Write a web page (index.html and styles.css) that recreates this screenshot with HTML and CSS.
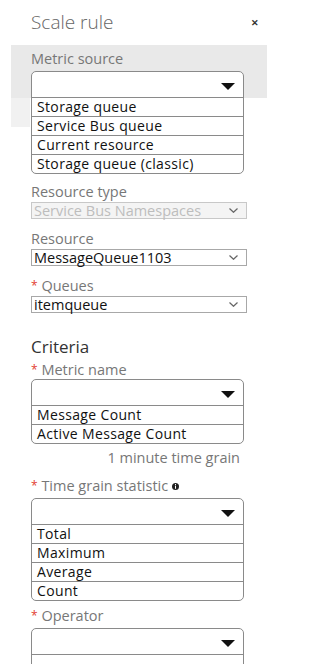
FILE: index.html
```html
<!DOCTYPE html>
<html lang="en">
<head>
  <meta charset="UTF-8" />
  <meta name="viewport" content="width=device-width, initial-scale=1.0"/>
  <title>Scale rule</title>
  <link rel="stylesheet" href="styles.css">
</head>
<body>
  <div class="panel">
    <header class="panel-head">
      <h1>Scale rule</h1>
      <span class="close">&#x2715;</span>
    </header>

    <div class="source-band">
      <div class="field-label">Metric source</div>
      <div class="dropdown">
        <div class="dropdown-head">
          <svg class="caret" width="14" height="7" viewBox="0 0 14 7"><polygon points="0,0 14,0 7,7" fill="#111"/></svg>
        </div>
        <ul class="dropdown-list">
          <li>Storage queue</li>
          <li>Service Bus queue</li>
          <li>Current resource</li>
          <li>Storage queue (classic)</li>
        </ul>
      </div>
    </div>

    <div class="form">
      <div class="field field-first">
        <div class="field-label">Resource type</div>
        <div class="select disabled">
          <span>Service Bus Namespaces</span>
          <svg width="9" height="5" viewBox="0 0 9 5"><polyline points="0.5,0.5 4.5,4.3 8.5,0.5" fill="none" stroke="#666" stroke-width="1.2"/></svg>
        </div>
      </div>

      <div class="field">
        <div class="field-label">Resource</div>
        <div class="select">
          <span>MessageQueue1103</span>
          <svg width="9" height="5" viewBox="0 0 9 5"><polyline points="0.5,0.5 4.5,4.3 8.5,0.5" fill="none" stroke="#666" stroke-width="1.2"/></svg>
        </div>
      </div>

      <div class="field">
        <div class="field-label"><span class="req">*</span> Queues</div>
        <div class="select">
          <span>itemqueue</span>
          <svg width="9" height="5" viewBox="0 0 9 5"><polyline points="0.5,0.5 4.5,4.3 8.5,0.5" fill="none" stroke="#666" stroke-width="1.2"/></svg>
        </div>
      </div>

      <h2 class="section-title">Criteria</h2>

      <div class="field field-tight">
        <div class="field-label"><span class="req">*</span> Metric name</div>
        <div class="dropdown dropdown-close">
          <div class="dropdown-head">
            <svg class="caret" width="14" height="7" viewBox="0 0 14 7"><polygon points="0,0 14,0 7,7" fill="#111"/></svg>
          </div>
          <ul class="dropdown-list">
            <li>Message Count</li>
            <li>Active Message Count</li>
          </ul>
        </div>
        <div class="hint">1 minute time grain</div>
      </div>

      <div class="field field-after-hint">
        <div class="field-label"><span class="req">*</span> Time grain statistic
          <svg class="info" width="7" height="7" viewBox="0 0 7 7"><circle cx="3.5" cy="3.5" r="3.5" fill="#222"/><rect x="3" y="1" width="1" height="1" fill="#fff"/><rect x="3" y="2.6" width="1" height="3.2" fill="#fff"/></svg>
        </div>
        <div class="dropdown">
          <div class="dropdown-head">
            <svg class="caret" width="14" height="7" viewBox="0 0 14 7"><polygon points="0,0 14,0 7,7" fill="#111"/></svg>
          </div>
          <ul class="dropdown-list">
            <li>Total</li>
            <li>Maximum</li>
            <li>Average</li>
            <li>Count</li>
          </ul>
        </div>
      </div>

      <div class="field field-last">
        <div class="field-label"><span class="req">*</span> Operator</div>
        <div class="dropdown">
          <div class="dropdown-head">
            <svg class="caret" width="14" height="7" viewBox="0 0 14 7"><polygon points="0,0 14,0 7,7" fill="#111"/></svg>
          </div>
          <ul class="dropdown-list">
            <li>&nbsp;</li>
          </ul>
        </div>
      </div>
    </div>
  </div>
</body>
</html>
```

FILE: styles.css
```css
body {
  margin: 0;
  background: #fff;
  color: #1e1e1e;
  font-family: 'Open Sans', 'Noto Sans', sans-serif;
  overflow: hidden;
}
.panel {
  padding-top: 10px;
}
.panel-head {
  display: flex;
  justify-content: space-between;
  align-items: center;
  height: 24px;
  padding: 0 57px 0 31px;
}
.panel-head h1 {
  margin: 0;
  font-size: 19px;
  font-weight: 300;
  color: #666;
}
.close {
  font-size: 9px;
  font-weight: bold;
  color: #333;
}
.source-band {
  margin: 11px 0 0 11px;
  width: 236px;
  padding: 5px 0 0 20px;
  background:
    linear-gradient(#e9e9e9, #e9e9e9) 0 0 / 256px 53px no-repeat,
    linear-gradient(#f1f1f1, #f1f1f1) 0 0 / 19px 82px no-repeat;
}
.field-label {
  font-size: 14.5px;
  line-height: 18px;
  color: #777;
}
.req {
  color: #e2412f;
  font-size: 12px;
  vertical-align: 1px;
}
.info {
  vertical-align: 1px;
}
.dropdown {
  width: 213px;
  margin-top: 3px;
  box-sizing: border-box;
  border: 1.5px solid #8a8a8a;
  border-radius: 5px;
  background: #fff;
  overflow: hidden;
}
.dropdown-close {
  margin-top: 0;
}
.dropdown-head {
  height: 26px;
  display: flex;
  justify-content: flex-end;
  align-items: center;
  padding: 3px 8px 0 0;
  box-sizing: border-box;
  border-bottom: 1.5px solid #8a8a8a;
}
.dropdown-list {
  list-style: none;
  margin: 0;
  padding: 0;
}
.dropdown-list li {
  height: 18px;
  line-height: 17px;
  padding-left: 5px;
  font-size: 14px;
  letter-spacing: 0.35px;
  color: #111;
  border-top: 1px solid #8a8a8a;
}
.dropdown-list li:first-child {
  border-top: none;
}
.form {
  padding-left: 31px;
}
.field {
  margin-top: 11px;
}
.field-first {
  margin-top: 9px;
}
.select {
  width: 216px;
  height: 17px;
  margin-top: 1px;
  box-sizing: border-box;
  border: 1px solid #a8a8a8;
  display: flex;
  justify-content: space-between;
  align-items: center;
  padding: 0 8px 0 2px;
  font-size: 14.5px;
  color: #111;
}
.select.disabled {
  background: #f4f4f4;
  border-color: #c8c8c8;
  color: #bdbdbd;
}
.section-title {
  margin: 23px 0 0;
  font-size: 17px;
  line-height: 22px;
  font-weight: normal;
  color: #333;
}
.field-tight {
  margin-top: 3px;
}
.hint {
  width: 209px;
  text-align: right;
  font-size: 14.5px;
  line-height: 18px;
  color: #777;
  margin-top: 5px;
}
.field-after-hint {
  margin-top: 10px;
}
.field-last {
  margin-top: 6px;
}
```
